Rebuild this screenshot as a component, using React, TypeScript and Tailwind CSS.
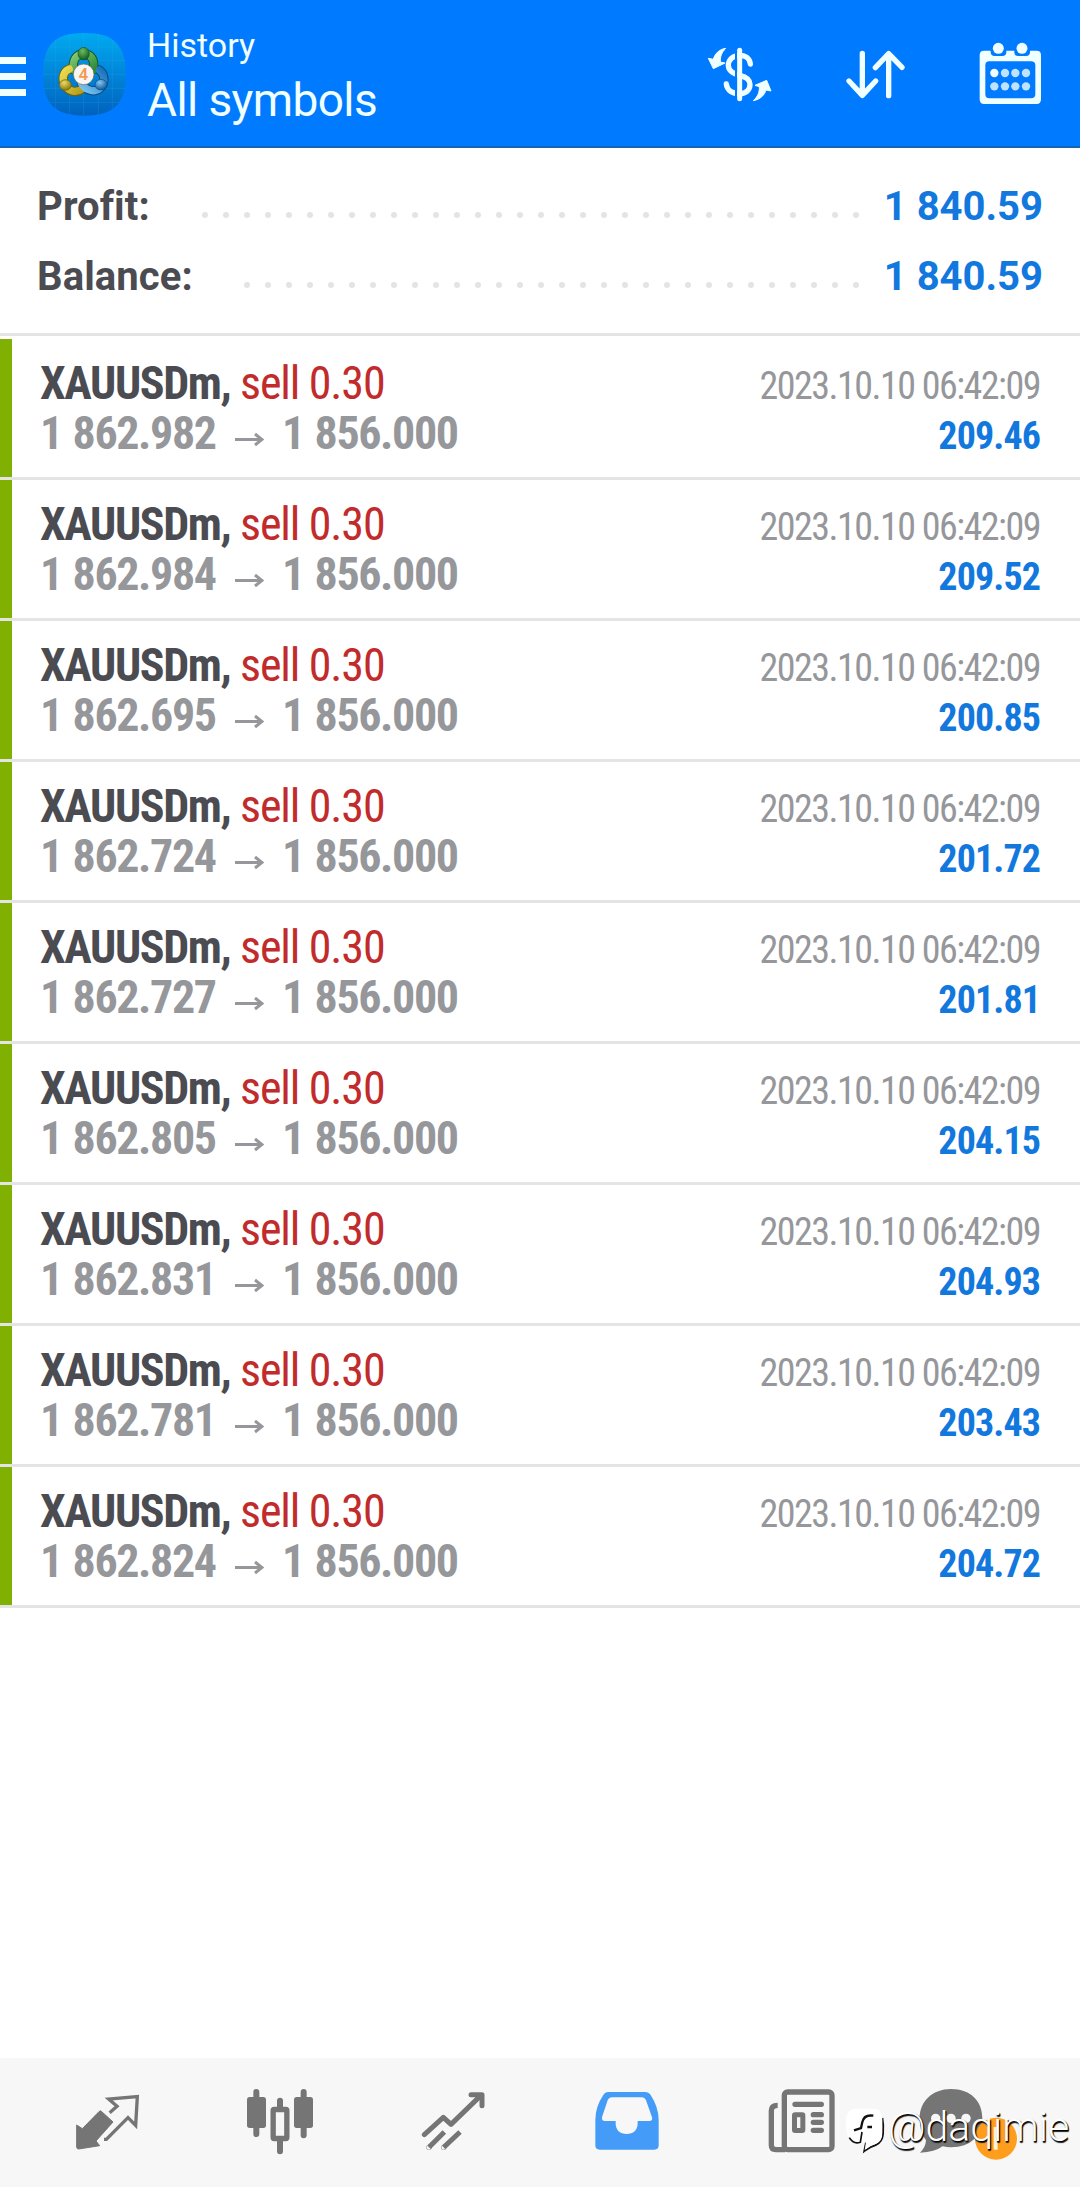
const deals = [
  { id: 1, open: '1 862.982', close: '1 856.000', time: '2023.10.10 06:42:09', profit: '209.46' },
  { id: 2, open: '1 862.984', close: '1 856.000', time: '2023.10.10 06:42:09', profit: '209.52' },
  { id: 3, open: '1 862.695', close: '1 856.000', time: '2023.10.10 06:42:09', profit: '200.85' },
  { id: 4, open: '1 862.724', close: '1 856.000', time: '2023.10.10 06:42:09', profit: '201.72' },
  { id: 5, open: '1 862.727', close: '1 856.000', time: '2023.10.10 06:42:09', profit: '201.81' },
  { id: 6, open: '1 862.805', close: '1 856.000', time: '2023.10.10 06:42:09', profit: '204.15' },
  { id: 7, open: '1 862.831', close: '1 856.000', time: '2023.10.10 06:42:09', profit: '204.93' },
  { id: 8, open: '1 862.781', close: '1 856.000', time: '2023.10.10 06:42:09', profit: '203.43' },
  { id: 9, open: '1 862.824', close: '1 856.000', time: '2023.10.10 06:42:09', profit: '204.72' },
]

function AppLogo() {
  return (
    <svg className="ml-[17px] h-[83px] w-[83px]" viewBox="39 39 249 249">
      <defs>
        <linearGradient id="tile" x1="0" y1="0" x2="0" y2="1">
          <stop offset="0" stopColor="#00aaf0" />
          <stop offset="0.5" stopColor="#0085d8" />
          <stop offset="1" stopColor="#0062bd" />
        </linearGradient>
        <linearGradient id="green" x1="0" y1="0" x2="1" y2="1">
          <stop offset="0" stopColor="#86c974" />
          <stop offset="1" stopColor="#2c8a35" />
        </linearGradient>
        <linearGradient id="yellow" x1="0" y1="0" x2="1" y2="1">
          <stop offset="0" stopColor="#ecdc50" />
          <stop offset="1" stopColor="#b79d1c" />
        </linearGradient>
        <linearGradient id="blue" x1="0" y1="1" x2="1" y2="0">
          <stop offset="0" stopColor="#7cc6f2" />
          <stop offset="1" stopColor="#1972b8" />
        </linearGradient>
        <radialGradient id="greenHead" cx="0.4" cy="0.3" r="0.7">
          <stop offset="0" stopColor="#6fbb60" />
          <stop offset="1" stopColor="#125f22" />
        </radialGradient>
        <radialGradient id="yellowHead" cx="0.4" cy="0.3" r="0.7">
          <stop offset="0" stopColor="#eadb62" />
          <stop offset="1" stopColor="#8a770b" />
        </radialGradient>
        <radialGradient id="blueHead" cx="0.4" cy="0.3" r="0.7">
          <stop offset="0" stopColor="#85c8f0" />
          <stop offset="1" stopColor="#0f5a9c" />
        </radialGradient>
      </defs>
      <path d="M163 39C252 39 287 74 287 163S252 287 163 287S39 252 39 163S74 39 163 39Z" fill="url(#tile)" />
      <path d="M60 81H266M40 121H286M39 163H287M40 205H286M58 247H268M77 58V268M119 42V284M161 39V287M205 42V284M247 60V266" stroke="#48b4ec" strokeWidth="1.5" opacity="0.35" />
      <g fill="none" strokeLinecap="round" strokeWidth="28">
        <path d="M131 150C126 119 139 103 160 102C183 102 196 119 190 150" stroke="#14562b" />
        <path d="M118 147C97 155 94 181 108 200C121 218 143 217 156 207" stroke="#6a630f" />
        <path d="M208 150C227 165 225 190 211 204C196 219 166 212 154 190" stroke="#0a4a86" />
      </g>
      <g fill="none" strokeLinecap="round" strokeWidth="22">
        <path d="M131 150C126 119 139 103 160 102C183 102 196 119 190 150" stroke="url(#green)" />
        <path d="M118 147C97 155 94 181 108 200C121 218 143 217 156 207" stroke="url(#yellow)" />
        <path d="M208 150C227 165 225 190 211 204C196 219 166 212 154 190" stroke="url(#blue)" />
      </g>
      <ellipse cx="161" cy="101" rx="17" ry="19" fill="url(#greenHead)" stroke="#14562b" strokeWidth="2" />
      <ellipse cx="106" cy="195" rx="18" ry="16" fill="url(#yellowHead)" stroke="#6a630f" strokeWidth="2" />
      <ellipse cx="213" cy="194" rx="18" ry="16" fill="url(#blueHead)" stroke="#0a4a86" strokeWidth="2" />
      <circle cx="161" cy="163" r="31" fill="#f7f6f4" stroke="#6f6a55" strokeWidth="2" />
      <text x="160" y="181" textAnchor="middle" fontFamily="Roboto, sans-serif" fontSize="51" fontWeight="600" fill="#f39a55">4</text>
    </svg>
  )
}

function CurrencyIcon() {
  return (
    <svg className="h-14 w-[68px]" viewBox="18 18 204 168">
      <path d="M151 72C149 53 133 46 119 46C99 46 85 59 85 76C85 94 99 101 119 106C140 111 150 119 150 133C150 151 138 161 119 161C97 161 81 151 79 132" fill="none" stroke="#f0ffff" strokeWidth="16" strokeLinecap="round" />
      <path d="M108 34V176" stroke="#007aff" strokeWidth="6" />
      <path d="M119 31V176" stroke="#f0ffff" strokeWidth="15" strokeLinecap="round" />
      <g fill="#f0ffff" stroke="#f0ffff" strokeWidth="3" strokeLinejoin="round">
        <path d="M77 25C57 28 44 42 40 58L25 55L40 86L75 69L61 66C60 49 66 37 77 25Z" />
        <path d="M160 182C182 178 194 164 198 150L213 153L200 121L165 136L178 140C179 157 173 170 160 182Z" />
      </g>
    </svg>
  )
}

function SortIcon() {
  return (
    <svg className="ml-[71px] h-[51px] w-[61px]" viewBox="495 147 183 153" fill="none" stroke="#f0ffff" strokeWidth="16" strokeLinecap="round" strokeLinejoin="round">
      <path d="M547 160V286M507 243L547 286L587 243" />
      <path d="M626 287V161M586 203L626 161L666 202" />
    </svg>
  )
}

function CalendarIcon() {
  return (
    <svg className="ml-[73px] h-[63px] w-[63px]" viewBox="897 126 189 189" fill="#f0ffff">
      <path fillRule="evenodd" d="M912 152H1070Q1083 152 1083 165V298Q1083 312 1070 312H912Q899 312 899 298V165Q899 152 912 152ZM928 184Q916 184 916 196V283Q916 295 928 295H1053Q1066 295 1066 283V196Q1066 184 1053 184Z" />
      <path d="M932 150H979V157Q979 168 967 168H944Q932 168 932 157ZM1003 150H1050V157Q1050 168 1038 168H1015Q1003 168 1003 157Z" fill="#007aff" />
      <circle cx="955" cy="145" r="16.5" />
      <circle cx="1026" cy="145" r="16.5" />
      <circle cx="943" cy="219" r="12.5" />
      <g fill="#bfe2ff">
        <circle cx="975" cy="219" r="12.5" />
        <circle cx="1006" cy="219" r="12.5" />
        <circle cx="1038" cy="219" r="12.5" />
        <circle cx="943" cy="259" r="12.5" />
        <circle cx="975" cy="259" r="12.5" />
        <circle cx="1006" cy="259" r="12.5" />
        <circle cx="1038" cy="259" r="12.5" />
      </g>
    </svg>
  )
}

function QuotesIcon() {
  return (
    <svg className="mt-[35px] ml-[75px] h-[58px] w-[65px]" viewBox="225 129 195 174">
      <path d="M304 184L339 216L288 273L299 287L236 297Q230 297 230 291V225L247 236L298 184Q301 181 304 184Z" fill="#757575" stroke="#757575" strokeWidth="3" strokeLinejoin="round" />
      <path d="M329 188L351 169L326 147L412 140L407 226L384 203L319 268L312 268" fill="none" stroke="#757575" strokeWidth="10" />
    </svg>
  )
}

function ChartIcon() {
  return (
    <svg className="mt-[30px] ml-[106px] h-[68px] w-[68px]" viewBox="738 114 204 204">
      <path d="M769 126V252M911 126V256M840 152V176M840 268V304" stroke="#757575" strokeWidth="18" strokeLinecap="round" />
      <rect x="741" y="141" width="57" height="93" rx="8" fill="#757575" />
      <rect x="882" y="141" width="57" height="93" rx="8" fill="#757575" />
      <rect x="819.5" y="178.5" width="41" height="87" rx="3" fill="#f7f7f7" stroke="#757575" strokeWidth="16" />
    </svg>
  )
}

function TradeIcon() {
  return (
    <svg className="mt-[33px] ml-[107px] h-[60px] w-[65px]" viewBox="183 123 195 180" fill="none" stroke="#757575" strokeWidth="15" strokeLinejoin="round">
      <path d="M193 254L250 202L273 223L362 137" strokeLinecap="round" />
      <path d="M333 134H366V167" strokeLinecap="round" />
      <path d="M207 292L253 246M251 292L300 246" />
      <circle cx="207" cy="292" r="0.5" />
      <circle cx="251" cy="292" r="0.5" />
    </svg>
  )
}

function HistoryIcon() {
  return (
    <svg className="mt-[33px] ml-[108px] h-[60px] w-[66px]" viewBox="702 123 198 180">
      <path fillRule="evenodd" d="M745 126H855Q866 126 872 135Q896 172 896 210V286Q896 299 883 299H719Q706 299 706 286V210Q706 170 730 135Q735 126 745 126ZM756 142Q747 142 743 151L726 202Q724 213 735 213H767V220C767 241 780 252 800 252S833 241 833 220V213H868Q879 213 876 202L858 151Q854 142 845 142Z" fill="#449cf8" />
    </svg>
  )
}

function NewsIcon() {
  return (
    <svg className="mt-[30px] ml-[107px] h-[66px] w-[69px]" viewBox="141 114 207 198" fill="none" stroke="#757575" strokeWidth="16">
      <rect x="193" y="126" width="143" height="173" rx="10" />
      <path d="M173 166Q154 166 154 182V286Q154 299 168 299H196" />
      <path d="M225 163H304M280 194H304M280 217H304M280 241H304" strokeLinecap="round" />
      <rect x="223.5" y="194.5" width="25" height="47" rx="2" strokeWidth="15" />
    </svg>
  )
}

function ChatIcon() {
  return (
    <svg className="mt-[30px] ml-[82px] h-[72px] w-[99px]" viewBox="594 114 297 216">
      <path d="M693 117C752 117 787 153 787 205S752 292 693 292Q680 292 668 289Q645 306 600 308Q617 292 618 271Q599 250 599 205C599 153 638 117 693 117Z" fill="#757575" />
      <circle cx="647" cy="205" r="14" fill="#f7f7f7" />
      <circle cx="693" cy="205" r="14" fill="#f7f7f7" />
      <circle cx="738" cy="205" r="14" fill="#f7f7f7" />
      <circle cx="828" cy="266" r="63" fill="#ff9d1c" />
      <path d="M827 231V299" stroke="#fff3d6" strokeWidth="12" />
    </svg>
  )
}

function Watermark() {
  return (
    <div className="absolute top-[2102px] left-[846px] flex">
      <svg className="mt-[6px] h-[46px] w-[40px]" viewBox="0 0 120 138">
        <path d="M109 30Q113 50 111 78Q109 101 91 110Q73 115 55 129L60 104" fill="none" stroke="#111" strokeWidth="6" />
        <path d="M32 2H84Q109 2 109 38V74Q109 99 91 107Q73 112 56 126L60 102Q26 113 8 88Q0 74 0 38Q0 2 32 2Z" fill="#fff" />
        <path d="M10 89Q22 110 43 103L48 72" fill="none" stroke="#111" strokeWidth="5" />
        <path d="M82 23Q54 19 49 42L45 60L24 67M64 57H78" fill="none" stroke="#111" strokeWidth="7" />
      </svg>
      <span className="ml-[2px] text-[41px] leading-[50px] font-light whitespace-nowrap text-white [text-shadow:1px_1px_1px_#000,1px_2px_1px_#222]">@daqimie</span>
    </div>
  )
}

function SummaryRow({ label, value, dots }: { label: string; value: string; dots: number }) {
  return (
    <div className="flex h-[70px] items-center justify-between pr-[37px] pl-[37px] text-[40px] leading-[70px]">
      <span className="flex-1 font-bold tracking-[0.1px] text-[#4b4b52]">{label}</span>
      <div className="mr-[27px] flex gap-[15px] pt-[15px]">
        {Array.from({ length: dots }, (_, i) => (
          <span key={i} className="h-[6px] w-[6px] rounded-full bg-[#e4e4e4]" />
        ))}
      </div>
      <span className="flex w-[157px] justify-end font-bold whitespace-nowrap text-[#1278de]">{value}</span>
    </div>
  )
}

function DealRow({ deal }: { deal: (typeof deals)[number] }) {
  return (
    <div className="flex h-[141px] border-b-[3px] border-[#e4e4e4] font-['Roboto_Condensed',Roboto,sans-serif]">
      <div className="w-[12px] bg-[#7fb002]" />
      <div className="flex flex-1 justify-between pt-[19px] pr-[40px] pl-[28px]">
        <div className="text-[46px] leading-[50px] whitespace-nowrap">
          <div className="flex">
            <span className="w-[200px] font-bold tracking-[-1.4px] text-[#4b4b52]">XAUUSDm,</span>
            <span className="tracking-[-1.1px] text-[#c12b2b]">sell 0.30</span>
          </div>
          <div className="flex font-bold tracking-[-1.4px] text-[#96979b] [word-spacing:1.5px]">
            <span className="w-[195px]">{deal.open}</span>
            <svg className="mt-[24px] h-[15px] w-[29px]" viewBox="0 0 29 15" fill="none" stroke="#96979b" strokeWidth="3">
              <path d="M0 7.5H26M20 2L27 7.5L20 13" />
            </svg>
            <span className="ml-[18px]">{deal.close}</span>
          </div>
        </div>
        <div className="flex flex-col items-end pt-[3px] text-[38px] leading-[50px] whitespace-nowrap">
          <div className="tracking-[-1.5px] text-[#96979b]">{deal.time}</div>
          <div className="font-bold tracking-[-0.9px] text-[#1278de]">{deal.profit}</div>
        </div>
      </div>
    </div>
  )
}

export default function App() {
  return (
    <div className="relative flex h-[2187px] w-[1080px] flex-col overflow-hidden bg-white font-['Roboto',sans-serif]">
      <header className="flex h-[148px] items-start border-b-2 border-[#1565b5] bg-[#007aff] pr-[38px] text-[#f0ffff]">
        <div className="mt-[57px] flex w-[26px] flex-col gap-[9px]">
          <span className="h-[7px] bg-[#f0ffff]" />
          <span className="h-[7px] bg-[#f0ffff]" />
          <span className="h-[7px] bg-[#f0ffff]" />
        </div>
        <div className="pt-[33px]">
          <AppLogo />
        </div>
        <div className="flex-1 pt-[25px] pl-[21px]">
          <div className="text-[34px] leading-[40px]">History</div>
          <div className="pt-[6px] text-[46px] leading-[58px] tracking-[-0.6px]">All symbols</div>
        </div>
        <div className="flex pt-[46px]">
          <CurrencyIcon />
          <div className="pt-[3px]">
            <SortIcon />
          </div>
          <div className="-mt-1">
            <CalendarIcon />
          </div>
        </div>
      </header>

      <section className="h-[188px] border-b-[3px] border-[#e4e4e4] pt-[24px]">
        <SummaryRow label="Profit:" value="1 840.59" dots={32} />
        <SummaryRow label="Balance:" value="1 840.59" dots={30} />
      </section>

      <main className="flex-1 pt-[3px]">
        {deals.map((deal) => (
          <DealRow key={deal.id} deal={deal} />
        ))}
      </main>

      <nav className="flex h-[129px] items-start bg-[#f7f7f7]">
        <QuotesIcon />
        <ChartIcon />
        <TradeIcon />
        <HistoryIcon />
        <NewsIcon />
        <ChatIcon />
      </nav>

      <Watermark />
    </div>
  )
}
